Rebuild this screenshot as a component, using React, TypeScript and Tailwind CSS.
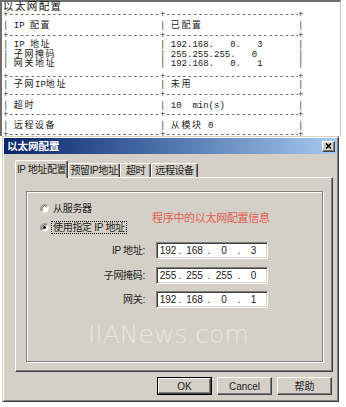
const mono = "font-['Liberation_Mono','Noto_Sans_CJK_SC',monospace] text-[9px] leading-none text-[#222]";
const ui = "font-['Liberation_Sans','Noto_Sans_CJK_SC',sans-serif]";

// CJK runs get extra tracking so they take two mono cells, as in a console
function Mixed({ text }: { text: string }) {
  const parts = text.split(/([\u3000-\u9fff]+)/);
  return (
    <>
      {parts.map((p, i) =>
        /[\u3000-\u9fff]/.test(p) ? (
          <span key={i} className="text-[9px] tracking-[1.6px]">
            {p}
          </span>
        ) : (
          <span key={i}>{p}</span>
        ),
      )}
    </>
  );
}

const dashes = "-".repeat(40);

function Sep({ h }: { h: string }) {
  return (
    <div className={`flex items-center ${h}`}>
      <div className="flex w-[157px] overflow-hidden whitespace-pre text-[#333]">
        <span>+</span>
        <span>{dashes}</span>
      </div>
      <div className="flex w-[138px] overflow-hidden whitespace-pre text-[#333]">
        <span>+</span>
        <span>{dashes}</span>
      </div>
      <span className="text-[#333]">+</span>
    </div>
  );
}

function Row({ h, a, b }: { h: string; a: string; b: string }) {
  return (
    <div className={`flex items-center whitespace-pre ${h}`}>
      <div className="w-[157px]">
        <span className="text-[#444]">|</span> <Mixed text={a} />
      </div>
      <div className="w-[138px]">
        <span className="text-[#444]">|</span> <Mixed text={b} />
      </div>
      <span className="text-[#444]">|</span>
    </div>
  );
}

function TopWindow() {
  return (
    <div className={`w-[341px] h-[136px] border-t-2 border-l-2 border-[#6e6e6e] border-r border-r-[#c8c8c8] pl-[1px] ${mono}`}>
      <div className="flex h-[11px] items-center text-[10.5px] tracking-[1.4px] text-[#111]">以太网配置</div>
      <Sep h="h-[5px]" />
      <Row h="h-[16px]" a="IP 配置" b="已配置" />
      <Sep h="h-[4px]" />
      <div className="h-[36px] pt-[3px]">
        <Row h="h-[9.5px]" a="IP 地址" b="192.168.   0.   3" />
        <Row h="h-[9.5px]" a="子网掩码" b="255.255.255.   0" />
        <Row h="h-[9.5px]" a="网关地址" b="192.168.   0.   1" />
      </div>
      <Sep h="h-[6px]" />
      <Row h="h-[11px]" a="子网IP地址" b="未用" />
      <Sep h="h-[8px]" />
      <Row h="h-[14px]" a="超时" b="10  min(s)" />
      <Sep h="h-[5px]" />
      <Row h="h-[16px]" a="远程设备" b="从模块 0" />
      <Sep h="h-[2px]" />
    </div>
  );
}

function Radio({ checked }: { checked?: boolean }) {
  return (
    <svg width="9" height="9" viewBox="0 0 9 9" className="shrink-0">
      <circle cx="4.5" cy="4.5" r="4" fill="#fff" />
      <path d="M 1.67 7.33 A 4 4 0 0 1 7.33 1.67" fill="none" stroke="#808080" strokeWidth="1" />
      <path d="M 2.4 6.6 A 3 3 0 0 1 6.6 2.4" fill="none" stroke="#404040" strokeWidth="1" />
      {checked && <circle cx="4.5" cy="4.5" r="1.5" fill="#000" />}
    </svg>
  );
}

function IpField({ octets }: { octets: string[] }) {
  return (
    <div className="flex h-[17px] w-[112px] items-center border border-t-[#808080] border-l-[#808080] border-r-white border-b-white bg-white shadow-[inset_1px_1px_0_#404040,inset_-1px_-1px_0_#d4d0c8] text-[10px] text-[#222]">
      <span className="w-[21px] pl-[1px] text-center">{octets[0]}</span>
      <span className="w-[4px] text-center">.</span>
      <span className="w-[25px] text-center">{octets[1]}</span>
      <span className="w-[4px] text-center">.</span>
      <span className="w-[26px] text-center">{octets[2]}</span>
      <span className="w-[4px] text-center">.</span>
      <span className="w-[25px] text-center">{octets[3]}</span>
    </div>
  );
}

const raised =
  "border border-t-white border-l-white border-r-[#404040] border-b-[#404040] shadow-[inset_-1px_-1px_0_#808080] bg-[#d4d0c8]";

function Tab({ label, w, active }: { label: string; w: string; active?: boolean }) {
  return (
    <div
      className={`${w} flex items-center justify-center rounded-t-[2px] border-t border-l border-r border-t-white border-l-white border-r-[#404040] bg-[#d4d0c8] shadow-[inset_-1px_0_0_#808080] text-[10px] tracking-[-0.4px] text-[#222] ${
        active ? "relative z-10 -mb-[1px] h-[18px]" : "h-[14px]"
      }`}
    >
      {label}
    </div>
  );
}

function Dialog() {
  return (
    <div
      className={`ml-[2px] flex h-[266px] w-[337px] flex-col border border-t-[#d4d0c8] border-l-[#d4d0c8] border-r-[#404040] border-b-[#404040] bg-[#d4d0c8] p-[1px] shadow-[inset_1px_1px_0_#fff,inset_-1px_-1px_0_#808080] ${ui}`}
    >
      <div className="flex h-[16px] items-center justify-between bg-gradient-to-r from-[#0a246a] to-[#a6caf0] pl-[3px]">
        <span className="text-[10.5px] font-bold leading-none text-white">以太网配置</span>
        <div className={`mr-[2px] flex h-[11px] w-[13px] items-center justify-center ${raised}`}>
          <svg width="7" height="6" viewBox="0 0 7 6">
            <path d="M1 0.5 L6 5.5 M6 0.5 L1 5.5" stroke="#000" strokeWidth="1.6" />
          </svg>
        </div>
      </div>

      <div className="ml-[11px] mr-[4px] mt-[7px] flex flex-col">
        <div className="flex h-[16px] items-end">
          <Tab label="IP 地址配置" w="w-[53px]" active />
          <Tab label="预留IP地址" w="w-[52px]" />
          <Tab label="超时" w="w-[31px]" />
          <Tab label="远程设备" w="w-[47px]" />
        </div>
        <div className="h-[195px] border border-t-white border-l-white border-r-[#404040] border-b-[#404040] shadow-[inset_-1px_-1px_0_#808080]">
          <div className="ml-[10px] mt-[13px] flex h-[171px] w-[297px] flex-col border border-[#808080] shadow-[1px_1px_0_#fff,inset_1px_1px_0_#fff]">
            <div className="flex pl-[13px] pt-[10px]">
              <div className="flex w-[112px] flex-col gap-[6px] text-[10px] tracking-[-0.3px] text-[#222]">
                <div className="flex h-[13px] items-center gap-[2px]">
                  <Radio />
                  <span className="border border-transparent px-[1px] leading-none">从服务器</span>
                </div>
                <div className="flex h-[13px] items-center gap-[2px]">
                  <Radio checked />
                  <span className="border border-dotted border-black px-[1px] leading-[11px]">使用指定 IP 地址</span>
                </div>
              </div>
              <span className="self-center text-[11px] tracking-[-0.3px] text-[#e25d50]">程序中的以太网配置信息</span>
            </div>

            <div className="mt-[8px] flex flex-col gap-[7.5px] text-[10px] text-[#222]">
              {[
                { label: "IP 地址:", ip: ["192", "168", "0", "3"] },
                { label: "子网掩码:", ip: ["255", "255", "255", "0"] },
                { label: "网关:", ip: ["192", "168", "0", "1"] },
              ].map((r) => (
                <div key={r.label} className="flex h-[17px] items-center">
                  <span className="w-[118px] text-right tracking-[-0.3px]">{r.label}</span>
                  <div className="ml-[11px]">
                    <IpField octets={r.ip} />
                  </div>
                </div>
              ))}
            </div>

            <div className="mt-[14px] pl-[61px] font-['DejaVu_Sans',sans-serif] text-[25px] font-extralight leading-none text-[#e8e6e0]">
              IIANews.com
            </div>
          </div>
        </div>
      </div>

      <div className="mr-[5px] mt-[5px] flex justify-end gap-[5px] text-[10px] text-[#222]">
        <div className="border border-black">
          <div className={`flex h-[16px] w-[53px] items-center justify-center ${raised}`}>OK</div>
        </div>
        <div className={`flex h-[18px] w-[55px] items-center justify-center ${raised}`}>Cancel</div>
        <div className={`flex h-[18px] w-[55px] items-center justify-center ${raised}`}>帮助</div>
      </div>
    </div>
  );
}

export default function App() {
  return (
    <div className="h-[407px] w-[346px] overflow-hidden bg-white">
      <TopWindow />
      <Dialog />
    </div>
  );
}
